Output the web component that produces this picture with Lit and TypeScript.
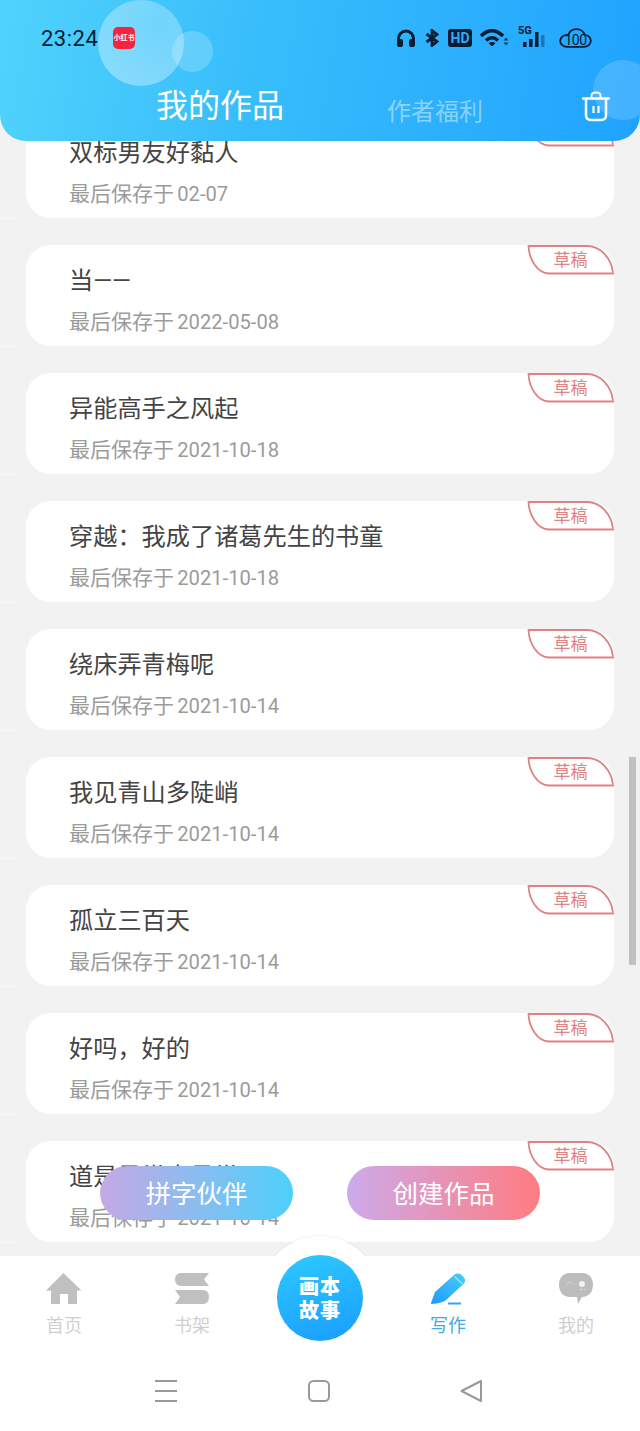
import { LitElement, css, html } from 'lit';
import { customElement } from 'lit/decorators.js';

// Saved drafts in the list.
const WORKS = [
  { title: '双标男友好黏人', date: '02-07' },
  { title: '当——', date: '2022-05-08' },
  { title: '异能高手之风起', date: '2021-10-18' },
  { title: '穿越：我成了诸葛先生的书童', date: '2021-10-18' },
  { title: '绕床弄青梅呢', date: '2021-10-14' },
  { title: '我见青山多陡峭', date: '2021-10-14' },
  { title: '孤立三百天', date: '2021-10-14' },
  { title: '好吗，好的', date: '2021-10-14' },
  { title: '道是寻常未寻常', date: '2021-10-14' },
];

@customElement('app-root')
export class AppRoot extends LitElement {
  // Draft ribbon in the card corner.
  private _tag() {
    return html`
      <div class="tag">
        <svg width="87" height="30" viewBox="0 0 87 30">
          <path
            d="M1.500 1H60C74 1 85 14 86 28.500H22C10 28 2 14 1.500 1Z"
            fill="#fff"
            stroke="#e08282"
            stroke-width="1.800"
          />
        </svg>
        <span class="tag-text">草稿</span>
      </div>
    `;
  }

  private _statusIcons() {
    return html`
      <div class="status-icons">
        <svg width="20" height="18" viewBox="0 0 20 18">
          <path d="M2.500 13V9.500a7.500 7.500 0 0 1 15 0V13" fill="none" stroke="#071d33" stroke-width="3" />
          <rect x="1" y="10" width="6" height="8" rx="2" fill="#071d33" />
          <rect x="13" y="10" width="6" height="8" rx="2" fill="#071d33" />
        </svg>
        <svg width="14" height="18" viewBox="0 0 14 18">
          <path d="M1.500 5L12 12.500L7 16.500V1.500L12 5.500L1.500 13" fill="none" stroke="#071d33" stroke-width="2.800" />
        </svg>
        <span class="hd">HD</span>
        <svg class="wifi" width="29" height="18" viewBox="0 0 29 18">
          <path d="M1 7C8 0 16 0 23 7" fill="none" stroke="#071d33" stroke-width="3.600" />
          <path d="M6 11.500C10 7.800 14 7.800 18 11.500" fill="none" stroke="#071d33" stroke-width="3.400" />
          <path d="M12 17.500L8.500 14C10.500 12.500 13.500 12.500 15.500 14Z" fill="#071d33" />
          <path d="M23.500 11.500L26 8.500L28.500 11.500ZM23.500 13.500L26 16.500L28.500 13.500Z" fill="#0c3f6b" />
        </svg>
        <div class="signal">
          <span class="five-g">5G</span>
          <svg width="29" height="19" viewBox="0 0 29 19">
            <rect x="5" y="13" width="3.500" height="5" fill="#071d33" />
            <rect x="11" y="10" width="3.500" height="8" fill="#071d33" />
            <rect x="17" y="3" width="3.500" height="15" fill="#071d33" />
            <rect x="23" y="6" width="3.500" height="12" fill="#1a77bd" />
          </svg>
        </div>
        <div class="cloud">
          <svg width="33" height="20" viewBox="0 0 33 20">
            <path
              d="M8 18.800H25C29 18.800 31.800 16 31.800 12.800C31.800 9.500 29 7 26 7.200C24.500 3.500 21.500 1.200 17.500 1.200C13.500 1.200 10.500 3.500 9.200 7C4.500 6.500 1.200 9.500 1.200 13C1.200 16 4 18.800 8 18.800Z"
              fill="none"
              stroke="#071d33"
              stroke-width="1.800"
            />
          </svg>
          <span class="cloud-text">100</span>
        </div>
      </div>
    `;
  }

  private _header() {
    return html`
      <header class="header">
        <i class="bubble big"></i>
        <i class="bubble small"></i>
        <i class="bubble corner"></i>
        <div class="status">
          <span class="time">23:24</span>
          <span class="app-badge">小红书</span>
          ${this._statusIcons()}
        </div>
        <div class="tabs">
          <span class="tab-active">我的作品</span>
          <span class="tab">作者福利</span>
          <svg class="trash" width="28" height="31" viewBox="0 0 28 31" fill="none" stroke="#fff" stroke-width="2.500">
            <path d="M1 7.500H27" stroke-linecap="round" />
            <path d="M9.500 7V4.500C9.500 2.500 11 1.500 14 1.500C17 1.500 18.500 2.500 18.500 4.500V7" stroke-width="2" />
            <path d="M4 8V24C4 27.500 6 29 9 29H19C22 29 24 27.500 24 24V8" />
            <path d="M11.500 15V22M16.500 15V22" stroke-width="2.200" />
          </svg>
        </div>
      </header>
    `;
  }

  private _nav() {
    const item = (label: string, icon: unknown, active = false) => html`
      <div class="nav-item ${active ? 'active' : ''}">
        <div class="nav-icon">${icon}</div>
        <span>${label}</span>
      </div>
    `;
    const home = html`<svg width="36" height="31" viewBox="0 0 36 31">
      <path d="M17.500 0L35.500 17.500H31V31H22V21H14V31H5V17.500H0Z" fill="#c0c0c0" />
    </svg>`;
    const shelf = html`<svg width="36" height="31" viewBox="0 0 36 31">
      <path d="M7 0H35L30 6.500L35 13H7C3 13 1 10 1 6.500C1 3 3 0 7 0Z" fill="#c0c0c0" />
      <path d="M1 17H29C33 17 35 20 35 24C35 28 33 31 29 31H1L6 24Z" fill="#c0c0c0" />
    </svg>`;
    const pen = html`<svg width="36" height="32" viewBox="0 0 36 32">
      <defs>
        <linearGradient id="pen" x1="0" y1="1" x2="1" y2="0">
          <stop offset="0" stop-color="#1c9bff" />
          <stop offset="1" stop-color="#48cdf7" />
        </linearGradient>
      </defs>
      <path
        d="M1 30L5 19L24 2C26 0 29 0 31 1.500L34 4.500C35.500 6.500 35.500 9 33.500 11L15 28C11 30 5 31 1 31Z"
        fill="url(#pen)"
      />
      <path d="M24.500 3.500L32.500 11" stroke="#9fe3fb" stroke-width="1.500" />
      <rect x="18" y="29.500" width="13" height="2" fill="#3aa5e6" />
    </svg>`;
    const mine = html`<svg width="36" height="32" viewBox="0 0 36 32">
      <path
        d="M12 0H24C31 0 35 5 35 11.500C35 19 31 24 24 24H24L20 31L19 24H12C5 24 1 19 1 11.500C1 5 5 0 12 0Z"
        fill="#bdbdbd"
      />
      <path d="M9 11L11.500 8.500L14 11" fill="none" stroke="#d9d9d9" stroke-width="1" />
      <circle cx="24" cy="11" r="3" fill="#f2f2f2" />
      <path d="M22 16.500H24M25.500 16.500H27" stroke="#dcdcdc" stroke-width="1.200" />
    </svg>`;

    return html`
      <nav class="nav">
        <div class="bulge"></div>
        <div class="nav-row">
          ${item('首页', home)} ${item('书架', shelf)}
          <div class="story-slot">
            <div class="story">画本<br />故事</div>
          </div>
          ${item('写作', pen, true)} ${item('我的', mine)}
        </div>
        <div class="system-bar">
          <svg width="24" height="24" viewBox="0 0 24 24">
            <path d="M1 2H23M1 12H23M1 22H23" stroke="#999" stroke-width="2" />
          </svg>
          <svg width="24" height="24" viewBox="0 0 24 24">
            <rect x="2" y="2" width="20" height="20" rx="4.500" fill="none" stroke="#999" stroke-width="2" />
          </svg>
          <svg width="24" height="24" viewBox="0 0 24 24">
            <path d="M1.500 12L21 2V22Z" fill="none" stroke="#999" stroke-width="2" stroke-linejoin="round" />
          </svg>
        </div>
      </nav>
    `;
  }

  // This function renders the component.
  render() {
    return html`
      <main class="list">
        ${WORKS.map(
          (work) => html`
            <article class="card">
              <div class="title">${work.title}</div>
              <div class="saved">最后保存于 <span class="date">${work.date}</span></div>
              ${this._tag()}
            </article>
          `,
        )}
      </main>
      <div class="scrollbar"></div>
      ${this._header()}
      <div class="actions">
        <button class="action partner">拼字伙伴</button>
        <button class="action create">创建作品</button>
      </div>
      ${this._nav()}
    `;
  }

  // Styles.
  static styles = css`
    :host {
      display: block;
      position: relative;
      width: 640px;
      height: 1431px;
      overflow: hidden;
      background: #f2f2f2;
      font-family: Roboto, 'Noto Sans CJK SC', sans-serif;
    }

    .list {
      display: flex;
      flex-direction: column;
      gap: 27px;
      padding: 117px 26px 0;
    }

    .card {
      position: relative;
      height: 101px;
      box-sizing: border-box;
      padding: 19px 0 0 43px;
      background: #fff;
      border-radius: 25px;
    }

    .card::before {
      content: '';
      position: absolute;
      left: -26px;
      bottom: -1px;
      width: 19px;
      height: 1px;
      background: #f8f8f8;
    }

    .title {
      height: 34px;
      line-height: 34px;
      font-size: 24.200px;
      color: #444;
    }

    .saved {
      margin-top: 12px;
      height: 24px;
      line-height: 24px;
      font-size: 21px;
      color: #9b9b9b;
    }

    .date {
      margin-left: -2px;
      font-size: 20.200px;
    }

    .tag {
      position: absolute;
      top: 0;
      right: 0;
      width: 87px;
      height: 30px;
    }

    .tag svg {
      display: block;
    }

    .tag-text {
      position: absolute;
      top: 0;
      left: 0;
      width: 87px;
      height: 30px;
      line-height: 31px;
      text-align: center;
      font-size: 17px;
      color: #e08282;
    }

    .scrollbar {
      position: absolute;
      top: 757px;
      left: 629px;
      width: 7px;
      height: 208px;
      background: #c1c1c1;
    }

    .header {
      position: absolute;
      top: 0;
      left: 0;
      width: 640px;
      height: 141px;
      overflow: hidden;
      border-radius: 0 0 26px 26px;
      background: linear-gradient(100deg, #50d3fb 0%, #38bdfb 40%, #20a3ff 100%);
    }

    .bubble {
      position: absolute;
      border-radius: 50%;
    }

    .big {
      left: 98px;
      top: 0;
      width: 86px;
      height: 86px;
      background: radial-gradient(circle at 70% 25%, rgba(255, 255, 255, 0.25), rgba(255, 255, 255, 0.38));
    }

    .small {
      left: 172px;
      top: 31px;
      width: 41px;
      height: 41px;
      background: rgba(255, 255, 255, 0.2);
    }

    .corner {
      left: 593px;
      top: 60px;
      width: 60px;
      height: 60px;
      background: rgba(255, 255, 255, 0.16);
    }

    .status {
      position: relative;
      display: flex;
      align-items: center;
      height: 76px;
      padding-left: 41px;
    }

    .time {
      width: 72px;
      font-size: 22px;
      font-weight: 400;
      letter-spacing: 0.5px;
      color: #071d33;
    }

    .app-badge {
      width: 22px;
      height: 22px;
      line-height: 22px;
      border-radius: 5px;
      background: #f5243e;
      color: #fff;
      font-size: 7px;
      font-weight: 700;
      text-align: center;
      white-space: nowrap;
    }

    .status-icons {
      display: flex;
      align-items: center;
      gap: 9px;
      margin-left: 261px;
    }

    .status-icons svg {
      display: block;
    }

    .hd {
      width: 24px;
      height: 18px;
      line-height: 18px;
      border-radius: 3px;
      background: #071d33;
      color: #2cabff;
      font-size: 14px;
      font-weight: 700;
      text-align: center;
    }

    .wifi {
      margin-left: -1px;
    }

    .signal {
      position: relative;
      width: 29px;
      height: 19px;
    }

    .five-g {
      position: absolute;
      left: 0;
      top: -5px;
      font-size: 11px;
      font-weight: 700;
      color: #071d33;
    }

    .cloud {
      position: relative;
      margin-left: 3px;
    }

    .cloud-text {
      position: absolute;
      left: 0;
      right: 0;
      top: 5px;
      line-height: 14px;
      text-align: center;
      font-size: 14px;
      letter-spacing: -0.5px;
      color: #071d33;
    }

    .tabs {
      position: relative;
      display: flex;
      align-items: center;
      height: 60px;
      padding-left: 156px;
    }

    .tab-active {
      font-size: 32px;
      line-height: 58px;
      color: #fff;
    }

    .tab {
      margin: 6px 0 0 103px;
      font-size: 24px;
      color: rgba(255, 255, 255, 0.45);
    }

    .trash {
      margin: 1px 0 0 99px;
    }

    .actions {
      position: absolute;
      top: 1166px;
      left: 100px;
      display: flex;
      gap: 54px;
    }

    .action {
      width: 193px;
      height: 54px;
      padding: 0 0 3px;
      border: 0;
      border-radius: 27px;
      color: #fff;
      font-family: inherit;
      font-size: 25.500px;
    }

    .partner {
      background: linear-gradient(90deg, #c6a9e5 0%, #4dd0fb 100%);
    }

    .create {
      background: linear-gradient(90deg, #cdaaec 0%, #ff7c80 100%);
    }

    .nav {
      position: absolute;
      top: 1256px;
      left: 0;
      width: 640px;
      height: 175px;
      background: #fff;
    }

    .bulge {
      position: absolute;
      top: -20px;
      left: 260px;
      width: 120px;
      height: 120px;
      border-radius: 50%;
      background: #fff;
      box-shadow: 0 -1px 2px rgba(0, 0, 0, 0.05);
      clip-path: inset(-4px -4px 100px -4px);
    }

    .nav-row {
      position: relative;
      display: grid;
      grid-template-columns: repeat(5, 128px);
      padding-top: 17px;
    }

    .nav-item {
      display: flex;
      flex-direction: column;
      align-items: center;
      font-size: 18px;
      line-height: 24px;
      color: #cfcfcf;
    }

    .nav-item.active {
      color: #46a7e4;
    }

    .nav-icon {
      height: 32px;
      margin-bottom: 9px;
    }

    .nav-icon svg {
      display: block;
    }

    .story-slot {
      display: flex;
      justify-content: center;
      margin-top: -18px;
    }

    .story {
      width: 86px;
      height: 86px;
      box-sizing: border-box;
      padding-top: 20px;
      border-radius: 50%;
      background: linear-gradient(165deg, #2cc9ff 0%, #1b9dff 100%);
      color: #fff;
      font-size: 20px;
      font-weight: 900;
      letter-spacing: 1px;
      line-height: 24px;
      text-align: center;
    }

    .system-bar {
      position: absolute;
      top: 123px;
      left: 154px;
      display: flex;
      gap: 129px;
    }

    .system-bar svg {
      display: block;
    }
  `;
}
